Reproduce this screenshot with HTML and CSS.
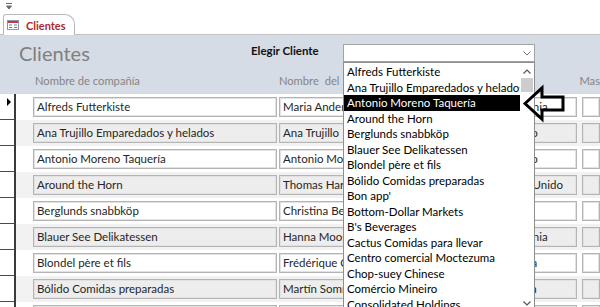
FILE: index.html
```html
<!DOCTYPE html>
<html lang="es">
<head>
    <meta charset="UTF-8">
    <title>Clientes</title>
    <link rel="stylesheet" href="styles.css">
</head>
<body>
    <div class="qat">
        <svg width="6" height="8" viewBox="0 0 6 8"><path d="M0 1.5h6M0.5 4h5L3 7z" fill="#6d6d6d" stroke="#6d6d6d" stroke-width="1"/></svg>
    </div>

    <div class="tabs">
        <div class="tab">
            <svg class="tab-icon" width="12" height="10" viewBox="0 0 12 10">
                <rect x="0.5" y="0.5" width="11" height="9" fill="#fff" stroke="#8a96a8"/>
                <rect x="1" y="1" width="10" height="2" fill="#c8373d"/>
                <path d="M2 5h3M2 7.5h3M7 5h3M7 7.5h3" stroke="#5c7ea8" stroke-width="1.2"/>
            </svg>
            <span>Clientes</span>
        </div>
    </div>

    <div class="form-header">
        <div class="header-top">
            <h1 class="title">Clientes</h1>
            <span class="pick-label">Elegir Cliente</span>
            <div class="combo">
                <div class="combo-input"></div>
                <div class="combo-btn">
                    <svg width="8" height="5" viewBox="0 0 8 5"><path d="M0.5 0.5L4 4L7.5 0.5" fill="none" stroke="#7a7a7a" stroke-width="1"/></svg>
                </div>

                <!-- open list of the combo box -->
                <div class="combo-list">
                    <ul class="items">
                        <li>Alfreds Futterkiste</li>
                        <li>Ana Trujillo Emparedados y helados</li>
                        <li class="selected">Antonio Moreno Taquería</li>
                        <li>Around the Horn</li>
                        <li>Berglunds snabbköp</li>
                        <li>Blauer See Delikatessen</li>
                        <li>Blondel père et fils</li>
                        <li>Bólido Comidas preparadas</li>
                        <li>Bon app'</li>
                        <li>Bottom-Dollar Markets</li>
                        <li>B's Beverages</li>
                        <li>Cactus Comidas para llevar</li>
                        <li>Centro comercial Moctezuma</li>
                        <li>Chop-suey Chinese</li>
                        <li>Comércio Mineiro</li>
                        <li>Consolidated Holdings</li>
                    </ul>
                    <div class="scrollbar">
                        <svg class="sb-up" width="8" height="5" viewBox="0 0 8 5"><path d="M0.5 4.5L4 1L7.5 4.5" fill="none" stroke="#555" stroke-width="1.2"/></svg>
                        <div class="sb-thumb"></div>
                        <svg class="sb-down" width="8" height="5" viewBox="0 0 8 5"><path d="M0.5 0.5L4 4L7.5 0.5" fill="none" stroke="#555" stroke-width="1.2"/></svg>
                    </div>
                </div>
            </div>
        </div>
        <div class="col-labels">
            <span class="lbl f-company">Nombre de compañía</span>
            <span class="lbl f-contact">Nombre del contacto</span>
            <span class="lbl f-country">País</span>
            <span class="lbl f-more">Mas</span>
        </div>
    </div>

    <div class="detail">
        <div class="row current">
            <div class="selector"><span class="pointer"></span></div>
            <div class="box f-company">Alfreds Futterkiste</div>
            <div class="box f-contact">Maria Anders</div>
            <div class="box f-country">Alemania</div>
            <div class="box f-more"></div>
        </div>
        <div class="row">
            <div class="selector"></div>
            <div class="box f-company">Ana Trujillo Emparedados y helados</div>
            <div class="box f-contact">Ana Trujillo</div>
            <div class="box f-country">México</div>
            <div class="box f-more"></div>
        </div>
        <div class="row">
            <div class="selector"></div>
            <div class="box f-company">Antonio Moreno Taquería</div>
            <div class="box f-contact">Antonio Moreno</div>
            <div class="box f-country">México</div>
            <div class="box f-more"></div>
        </div>
        <div class="row">
            <div class="selector"></div>
            <div class="box f-company">Around the Horn</div>
            <div class="box f-contact">Thomas Hardy</div>
            <div class="box f-country">Reino Unido</div>
            <div class="box f-more"></div>
        </div>
        <div class="row">
            <div class="selector"></div>
            <div class="box f-company">Berglunds snabbköp</div>
            <div class="box f-contact">Christina Berglund</div>
            <div class="box f-country">Suecia</div>
            <div class="box f-more"></div>
        </div>
        <div class="row">
            <div class="selector"></div>
            <div class="box f-company">Blauer See Delikatessen</div>
            <div class="box f-contact">Hanna Moos</div>
            <div class="box f-country">Alemania</div>
            <div class="box f-more"></div>
        </div>
        <div class="row">
            <div class="selector"></div>
            <div class="box f-company">Blondel père et fils</div>
            <div class="box f-contact">Frédérique Citeaux</div>
            <div class="box f-country">Francia</div>
            <div class="box f-more"></div>
        </div>
        <div class="row">
            <div class="selector"></div>
            <div class="box f-company">Bólido Comidas preparadas</div>
            <div class="box f-contact">Martín Sommer</div>
            <div class="box f-country">España</div>
            <div class="box f-more"></div>
        </div>
        <div class="row">
            <div class="selector"></div>
            <div class="box f-company"></div>
            <div class="box f-contact"></div>
            <div class="box f-country"></div>
            <div class="box f-more"></div>
        </div>
    </div>

    <!-- callout arrow pointing at the selected item -->
    <svg class="callout" width="50" height="40" viewBox="0 0 50 40">
        <path d="M5 19.5L22 4V13H43V26H22V35Z" fill="none" stroke="#000" stroke-width="3" stroke-linejoin="miter"/>
    </svg>
</body>
</html>
```

FILE: styles.css
```css
:root {
    --header-bg: #d6dce5;
    --box-border: #b4b4b4;
    --label: #858585;
}

* {
    margin: 0;
    padding: 0;
    box-sizing: border-box;
}

body {
    position: relative;
    width: 600px;
    height: 307px;
    overflow: hidden;
    background: #fff;
    font-family: Lato, 'Open Sans', sans-serif;
    font-size: 11.5px;
    color: #262626;
}

.qat {
    height: 14px;
    padding: 2px 0 0 6px;
}

.qat svg {
    display: block;
}

.tabs {
    height: 21px;
    border-bottom: 1px solid #c3c3c3;
}

.tab {
    display: inline-flex;
    align-items: center;
    gap: 7px;
    height: 21px;
    margin-left: 3px;
    padding: 0 8px 0 3px;
    background: #fff;
    border: 1px solid #b8b8b8;
    border-bottom: none;
    border-radius: 3px 10px 0 0;
    color: #b0272e;
    font-size: 11px;
    font-weight: 700;
}

.form-header {
    height: 59px;
    background: var(--header-bg);
}

.header-top {
    display: flex;
    align-items: flex-start;
    height: 35px;
    padding-left: 19px;
}

.title {
    width: 232px;
    margin-top: 5px;
    font-size: 20px;
    line-height: 26px;
    font-weight: 400;
    color: #7f7f7f;
}

.pick-label {
    width: 92px;
    margin-top: 9px;
    font-size: 11.5px;
    font-weight: 700;
    color: #111;
}

.combo {
    position: relative;
    display: flex;
    width: 192px;
    height: 18px;
    margin-top: 9px;
    background: #fff;
    border: 1px solid #a3a3a3;
}

.combo-input {
    flex: 1;
}

.combo-btn {
    display: flex;
    align-items: center;
    justify-content: center;
    width: 15px;
}

.combo-list {
    position: absolute;
    top: 17px;
    left: -1px;
    width: 192px;
    height: 246px;
    display: flex;
    background: #fff;
    border: 1px solid #8f8f8f;
    border-bottom: none;
    z-index: 2;
}

.items {
    flex: 1;
    list-style: none;
    padding-top: 1px;
    overflow: hidden;
}

.items li {
    height: 15.5px;
    line-height: 15.5px;
    padding-left: 3px;
    white-space: nowrap;
    overflow: hidden;
    color: #000;
}

.items li.selected {
    background: #000;
    color: #fff;
}

.scrollbar {
    position: relative;
    width: 14px;
    background: #fff;
}

.sb-up {
    position: absolute;
    top: 6px;
    left: 3px;
}

.sb-thumb {
    position: absolute;
    top: 15px;
    left: 1px;
    width: 12px;
    height: 14px;
    background: #cdcdcd;
}

.sb-down {
    position: absolute;
    top: 238px;
    left: 3px;
}

.col-labels {
    display: flex;
    height: 24px;
    padding-left: 16px;
    font-size: 11.2px;
    line-height: 16px;
    color: var(--label);
}

.col-labels .lbl {
    padding-left: 2px;
    padding-top: 3px;
    white-space: nowrap;
}

.col-labels .f-contact {
    word-spacing: 3px;
}

.f-company {
    width: 244px;
    margin-left: 17px;
}

.f-contact {
    width: 215px;
    margin-left: 2px;
}

.f-country {
    width: 80px;
    margin-left: 3px;
}

.f-more {
    flex: 1;
    margin-left: 5px;
}

.detail {
    height: 213px;
    overflow: hidden;
}

.row {
    display: flex;
    height: 26px;
}

.row:nth-child(even) {
    background: #f2f2f2;
}

.selector {
    position: relative;
    width: 16px;
    flex: none;
    background: #fff;
    border-right: 2px solid #3a3a3a;
    border-bottom: 1px solid #4a4a4a;
}

.pointer {
    position: absolute;
    top: 4px;
    left: 7px;
    border-left: 4px solid #000;
    border-top: 4px solid transparent;
    border-bottom: 4px solid transparent;
}

.box {
    height: 20px;
    margin-top: 3px;
    padding-left: 3px;
    line-height: 18px;
    white-space: nowrap;
    overflow: hidden;
    background: #fff;
    border: 1px solid var(--box-border);
    box-shadow: inset 0 0 0 1px #e2e2e2;
}

.row:nth-child(even) .box {
    background: #ededed;
}

.callout {
    position: absolute;
    left: 520px;
    top: 84px;
    z-index: 3;
}
```
